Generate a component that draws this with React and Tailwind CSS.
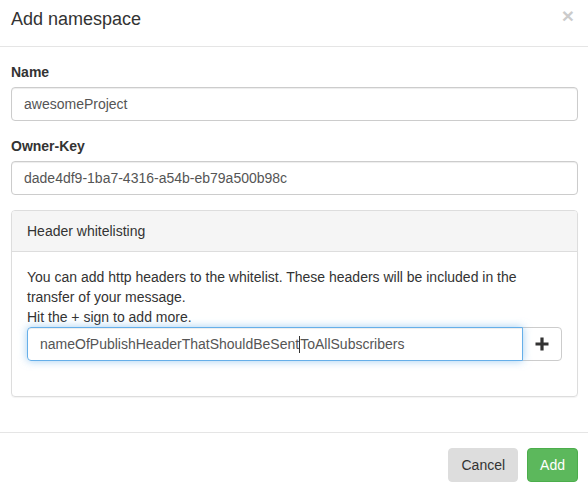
import { useState } from "react";

const font = { fontFamily: '"Liberation Sans", Arial, sans-serif' };

function Field({ label, value }) {
  return (
    <div className="mb-[15px]">
      <label className="block mb-[5px] text-[14px] leading-[20px] font-bold text-[#333]">{label}</label>
      <div className="h-[34px] px-[12px] flex items-center border border-[#ccc] rounded-[4px] text-[14px] text-[#555] shadow-[inset_0_1px_1px_rgba(0,0,0,0.075)]">
        {value}
      </div>
    </div>
  );
}

function PlusIcon() {
  return (
    <svg width="14" height="14" viewBox="0 0 14 14" className="text-[#333]">
      <path d="M5.4 0.5h3.2v4.9h4.9v3.2H8.6v4.9H5.4V8.6H0.5V5.4h4.9z" fill="currentColor" />
    </svg>
  );
}

export default function App() {
  const [headers] = useState(["nameOfPublishHeaderThatShouldBeSent", "ToAllSubscribers"]);

  return (
    <div className="w-[588px] h-[493px] bg-white overflow-hidden text-[#333]" style={font}>
      <div className="h-[47px] pl-[11px] pr-[10px] flex items-center justify-between border-b border-[#e5e5e5]">
        <h4 className="text-[18px] leading-[26px] -mt-[8px]">Add namespace</h4>
        <button className="text-[21px] font-bold leading-none text-black opacity-20 -mt-[16px] mr-[4px]">×</button>
      </div>

      <div className="pl-[11px] pr-[10px] pt-[15px] pb-[15px]">
        <Field label="Name" value="awesomeProject" />
        <Field label="Owner-Key" value="dade4df9-1ba7-4316-a54b-eb79a500b98c" />

        <div className="border border-[#ddd] rounded-[4px] mb-[20px] shadow-[0_1px_1px_rgba(0,0,0,0.05)]">
          <div className="bg-[#f5f5f5] border-b border-[#ddd] px-[15px] py-[10px] text-[14px] leading-[20px] rounded-t-[3px]">
            Header whitelisting
          </div>
          <div className="p-[15px] pb-[35px] text-[14px] leading-[20px]">
            <p>You can add http headers to the whitelist. These headers will be included in the transfer of your message.</p>
            <p>Hit the + sign to add more.</p>
            <div className="flex h-[34px]">
              <div className="flex-1 flex items-center px-[12px] border border-[#66afe9] rounded-l-[4px] text-[14px] text-[#555] shadow-[inset_0_1px_1px_rgba(0,0,0,0.075),0_0_8px_rgba(102,175,233,0.6)] relative z-10">
                {headers[0]}
                <span className="inline-block w-px h-[17px] bg-[#333]" />
                {headers[1]}
              </div>
              <button className="w-[40px] -ml-px flex items-center justify-center border border-[#ccc] rounded-r-[4px] bg-white">
                <PlusIcon />
              </button>
            </div>
          </div>
        </div>
      </div>

      <div className="border-t border-[#e5e5e5] pt-[15px] pr-[10px] flex justify-end gap-[9px]">
        <button className="h-[34px] px-[12px] rounded-[4px] bg-[#ddd] border border-[#ddd] text-[14px] text-[#333]">Cancel</button>
        <button className="h-[34px] px-[12px] rounded-[4px] bg-[#5cb85c] border border-[#4cae4c] text-[14px] text-white">Add</button>
      </div>
    </div>
  );
}
